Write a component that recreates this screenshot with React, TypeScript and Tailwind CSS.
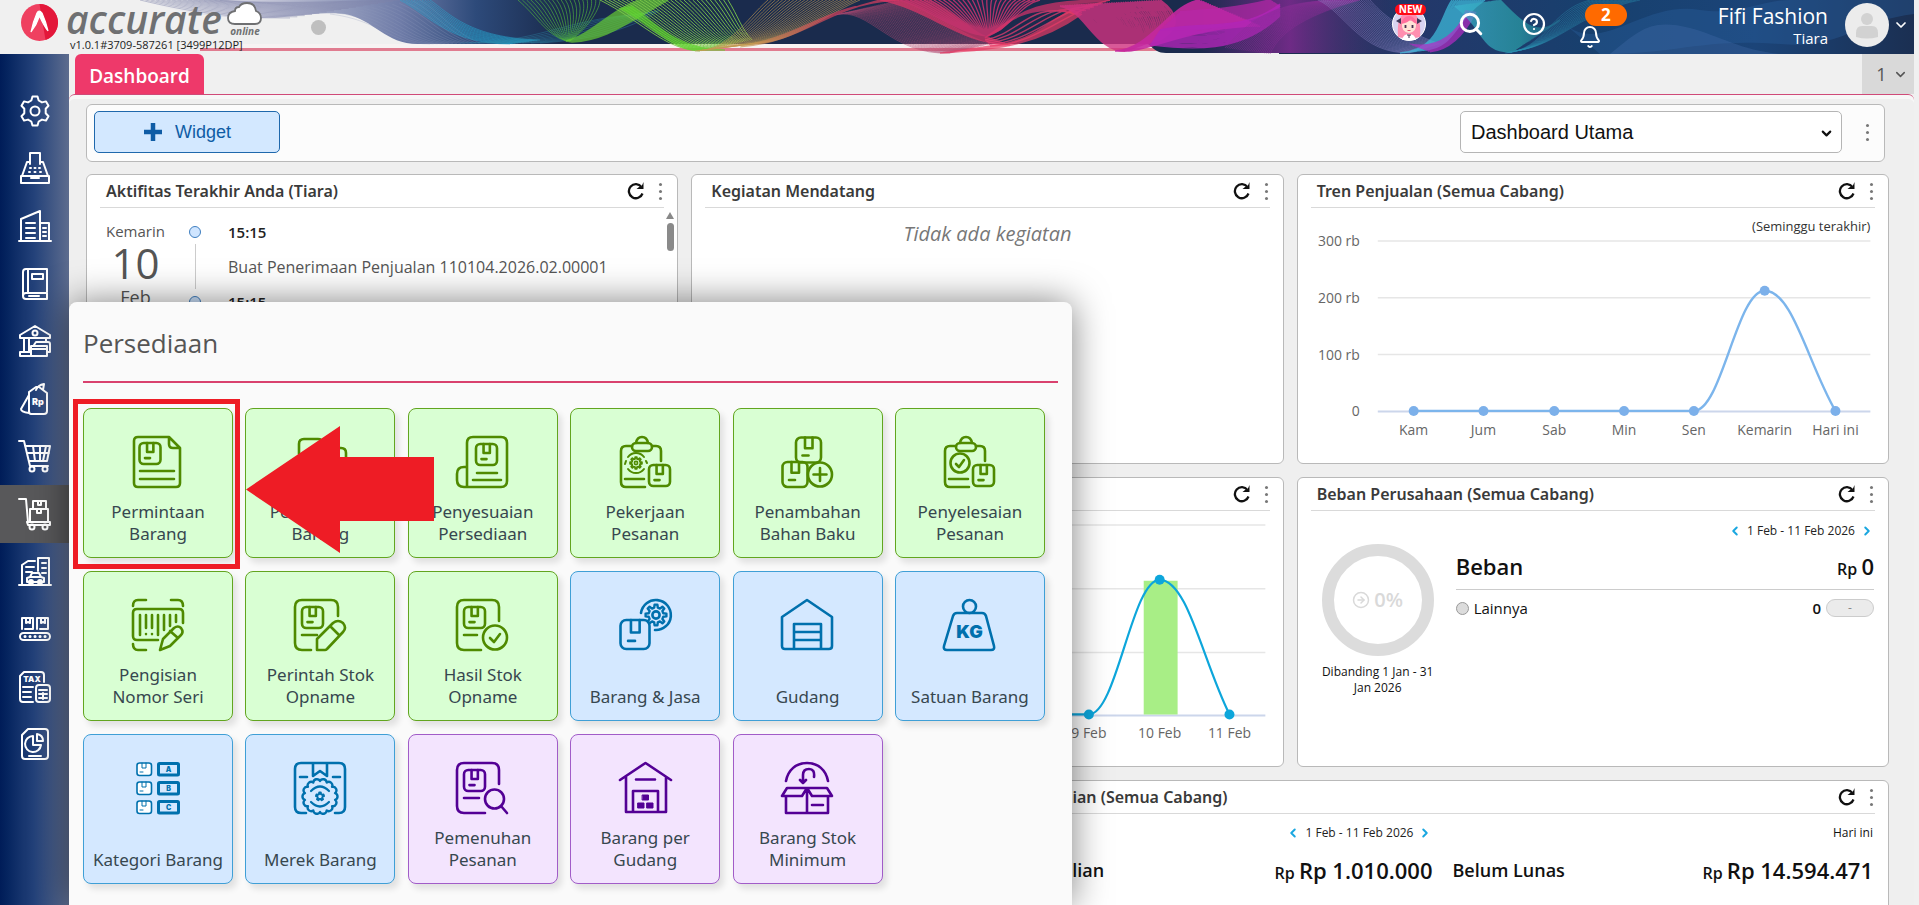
import React from "react";
import { Bell, ChevronDown, ChevronLeft, ChevronRight, CircleArrowRight, CircleHelp, Search } from "lucide-react";
import clsx from "clsx";

type Tone = "green" | "blue" | "purple";

const toneClass: Record<Tone, string> = {
  green: "bg-[#d9ffd3] border-[#62a51f] text-[#4f8a00]",
  blue: "bg-[#d4e8ff] border-[#3f9fd6] text-[#0070ad]",
  purple: "bg-[#f3e4fe] border-[#a15cc8] text-[#530095]",
};

// closed gear outline with flat teeth
const gearPath = (cx: number, cy: number, outer: number, inner: number, teeth: number) => {
  const pts: string[] = [];
  const step = (Math.PI * 2) / teeth;
  for (let i = 0; i < teeth; i++) {
    const a = i * step - Math.PI / 2;
    [
      [inner, -0.3],
      [outer, -0.17],
      [outer, 0.17],
      [inner, 0.3],
    ].forEach(([r, o]) => {
      pts.push(`${(cx + r * Math.cos(a + o * step)).toFixed(1)} ${(cy + r * Math.sin(a + o * step)).toFixed(1)}`);
    });
  }
  return `M${pts.join("L")}Z`;
};

// scalloped outline used on the brand badge
const sealPath = (cx: number, cy: number, r: number, lobes: number) => {
  const pt = (i: number) => {
    const a = (i / lobes) * Math.PI * 2 - Math.PI / 2;
    return `${(cx + r * Math.cos(a)).toFixed(1)} ${(cy + r * Math.sin(a)).toFixed(1)}`;
  };
  let d = `M${pt(0)}`;
  for (let i = 1; i <= lobes; i++) d += `A3.6 3.6 0 0 1 ${pt(i)}`;
  return d + "Z";
};

const Pkg = ({ x, y, s }: { x: number; y: number; s: number }) => (
  <g>
    <rect x={x} y={y} width={s} height={s} rx={s * 0.2} />
    <path d={`M${x + s * 0.36} ${y}v${s * 0.43}h${s * 0.3}v${-s * 0.43}`} />
    <path d={`M${x + s * 0.26} ${y + s * 0.72}h${s * 0.24}`} />
  </g>
);

const Clipboard = () => (
  <>
    <path d="M13 10H7q-5 0-5 5v31q0 5 5 5h19M33 10h4q5 0 5 5v10M6 43h19" />
    <rect x="13" y="7" width="20" height="8" rx="4" />
    <path d="M17 7q1-6 6-6t6 6" />
    <Pkg x={30} y={29} s={21} />
  </>
);

const tileIcons: Record<string, React.ReactNode> = {
  request: (
    <>
      <path d="M37 1H6q-4 0-4 4v42q0 4 4 4h38q4 0 4-4V12zM37 1v7q0 4 4 4h7" />
      <Pkg x={7.5} y={7} s={21} />
      <path d="M8 35h34M8 43h34" />
    </>
  ),
  transfer: (
    <>
      <path d="M5 18V8q0-5 5-5h14q4 0 4 4v12M40 12h7q5 0 5 5v10" />
      <Pkg x={4} y={28} s={21} />
      <path d="M30 38h20m-6-6l6 6-6 6" />
    </>
  ),
  adjust: (
    <>
      <path d="M11 51V7q0-6 6-6h28q6 0 6 6v38q0 6-6 6H8q-7 0-7-7v-6q0-7 7-7h3" />
      <Pkg x={20} y={8} s={21} />
      <path d="M21 37h20M17 44h28" />
    </>
  ),
  job: (
    <>
      <Clipboard />
      <path d={gearPath(17, 27, 6, 4.2, 8)} strokeWidth="1.8" />
      <circle cx="17" cy="27" r="1.6" strokeWidth="1.6" />
      <path d="M9 21a10 10 0 0 1 16 0M25 33a10 10 0 0 1-16 0M7 25l-1 3M27 25l1 2" strokeWidth="2" />
    </>
  ),
  material: (
    <>
      <Pkg x={15} y={1.5} s={25} />
      <Pkg x={1.5} y={26} s={25} />
      <circle cx="39" cy="38.5" r="12" fill="#d9ffd3" />
      <path d="M39 32v13M32.5 38.5h13" />
    </>
  ),
  finish: (
    <>
      <Clipboard />
      <circle cx="17" cy="27" r="9.5" />
      <path d="M13 28l3 3 5-7" />
    </>
  ),
  serial: (
    <>
      <path d="M1 7q0-6 5-6h8M39 1h7q5 0 5 6M1 45q0 6 5 6h8M26 41H5q-4 0-4-4V14q0-4 4-4h42q4 0 4 4v10" />
      <path d="M8 16v20M14 16v13M20 16v13M26 16v20M32 16v15M38 16v11M44 16v7M14 35v.1M20 35v.1" />
      <path d="M28 51l3-11 11-11q4-3 7 0 3 4 0 7L38 47zM38 32l8 7" />
    </>
  ),
  order: (
    <>
      <path d="M17 51H8q-7 0-7-7V8q0-7 7-7h29q7 0 7 7v9M8 36h15" />
      <Pkg x={8} y={8} s={21} />
      <path d="M23 51V40l16-16q5-4 10 0 4 5 0 9L33 50q-1 1-2 1zM36 27l9 9" />
    </>
  ),
  result: (
    <>
      <path d="M25 51H8q-7 0-7-7V8q0-7 7-7h28q7 0 7 7v14M8 36h13" />
      <Pkg x={8} y={8} s={21} />
      <circle cx="39" cy="38.5" r="12" />
      <path d="M34 39l4 4 6-8" />
    </>
  ),
  goods: (
    <>
      <Pkg x={1.5} y={21} s={29} />
      <path d="M22 14A15 15 0 1 1 36 31" />
      <path d={gearPath(37, 16, 10.5, 7.5, 8)} strokeWidth="2.4" />
      <circle cx="37" cy="16" r="3.6" />
    </>
  ),
  warehouse: <path d="M4 50q-3 0-3-3V18L26 1l25 17v29q0 3-3 3zM13 50V25h27v25M13 33h27M13 41h27" />,
  unit: (
    <>
      <circle cx="26.5" cy="7.5" r="6.5" />
      <path d="M14 14h25q3 0 4 3l8 30q1 4-3 4H4q-4 0-3-4l9-30q1-3 4-3z" />
      <text x="26.5" y="39" textAnchor="middle" className="font-['Inter'] text-[18px] font-black" fill="currentColor" stroke="none">
        KG
      </text>
    </>
  ),
  category: (
    <>
      {["A", "B", "C"].map((letter, i) => (
        <g key={letter} transform={`translate(0 ${i * 19})`}>
          <rect x="5" y="1" width="14.5" height="12.5" rx="2.5" fill="#fff" strokeWidth="1.6" />
          <path d="M10 1v5h4V1M8 10h3" strokeWidth="1" />
          <rect x="26.5" y="1.5" width="20" height="11.5" rx="1" strokeWidth="3" />
          <text x="36.5" y="9.5" textAnchor="middle" className="font-['Inter'] text-[7px] font-black" fill="currentColor" stroke="none">
            {letter}
          </text>
        </g>
      ))}
    </>
  ),
  brand: (
    <>
      <path d="M12 51H7q-6 0-6-6V7q0-6 6-6h38q6 0 6 6v38q0 6-6 6h-4M19 1v13l7-5 7 5V1M6 15h7M39 15h7" />
      <path d={sealPath(26, 34.5, 15.5, 14)} strokeWidth="2.4" />
      <path d="M17 29q9-9 18 0M17 40q9 9 18 0" strokeWidth="2.2" />
      <path d={gearPath(26, 34.5, 4, 2.6, 5)} strokeWidth="2" />
    </>
  ),
  fulfil: (
    <>
      <path d="M29 51H8q-7 0-7-7V8q0-7 7-7h28q7 0 7 7v14M8 36h15" />
      <Pkg x={8} y={8} s={21} />
      <circle cx="38.5" cy="37" r="9.5" />
      <path d="M45 44l6 7" />
    </>
  ),
  perWarehouse: (
    <>
      <path d="M1 18L26.5 1 52 18M7 15v35h40V15M17 17.5h19M14 50V29h25v21" />
      <path d="M23.5 33h6v5h-6zM19 41h6v5h-6zM28 41h6v5h-6z" fill="currentColor" strokeWidth="1" />
    </>
  ),
  minimum: (
    <>
      <path d="M5 19C7 8 15 1 26 1s19 7 21 18M22 21V13q0-6 6-6 6 0 5 8M19 18l3 3 3-3" />
      <path d="M6 26h40l5 8H31l-5-8-5 8H1zM5 34v17h42V34M26 26v25M31 43h11" />
    </>
  ),
};

const menuItems: { label: string; icon: string; tone: Tone }[] = [
  { label: "Permintaan Barang", icon: "request", tone: "green" },
  { label: "Pemindahan Barang", icon: "transfer", tone: "green" },
  { label: "Penyesuaian Persediaan", icon: "adjust", tone: "green" },
  { label: "Pekerjaan Pesanan", icon: "job", tone: "green" },
  { label: "Penambahan Bahan Baku", icon: "material", tone: "green" },
  { label: "Penyelesaian Pesanan", icon: "finish", tone: "green" },
  { label: "Pengisian Nomor Seri", icon: "serial", tone: "green" },
  { label: "Perintah Stok Opname", icon: "order", tone: "green" },
  { label: "Hasil Stok Opname", icon: "result", tone: "green" },
  { label: "Barang & Jasa", icon: "goods", tone: "blue" },
  { label: "Gudang", icon: "warehouse", tone: "blue" },
  { label: "Satuan Barang", icon: "unit", tone: "blue" },
  { label: "Kategori Barang", icon: "category", tone: "blue" },
  { label: "Merek Barang", icon: "brand", tone: "blue" },
  { label: "Pemenuhan Pesanan", icon: "fulfil", tone: "purple" },
  { label: "Barang per Gudang", icon: "perWarehouse", tone: "purple" },
  { label: "Barang Stok Minimum", icon: "minimum", tone: "purple" },
];

const navItems: { label: string; active?: boolean; icon: React.ReactNode }[] = [
  {
    label: "Pengaturan",
    icon: (
      <>
        <path d="M13.5 1.5h5l1.2 4 3.3 1.9 4-1 2.5 4.3-2.8 3v4.6l2.8 3-2.5 4.3-4-1-3.3 1.9-1.2 4h-5l-1.2-4L9 24.6l-4 1-2.5-4.3 2.8-3v-4.6l-2.8-3L5 6.4l4 1 3.3-1.9z" />
        <circle cx="16" cy="16" r="4.5" />
      </>
    ),
  },
  {
    label: "Kasir",
    icon: (
      <>
        <path d="M11 12V1h10v11M8 10h3M21 10h3l5 14H3L8 10M2 24h28v7H2zM12 26h8" />
        <path d="M11 16h1M15.5 16h1M20 16h1M10 20h1M15.5 20h1M21 20h1" />
      </>
    ),
  },
  {
    label: "Perusahaan",
    icon: <path d="M0 31h32M2 31V9l19-8v30M21 13h9v18M7 13h9M7 18h9M7 23h9M7 28h9M24 18h3M24 22h3M24 26h3" />,
  },
  {
    label: "Buku Besar",
    icon: <path d="M28 24V1H7Q4 1 4 4v24q0 3 3 3h21v-6H7q-3 0-3 3M9 1v24M13 6h11v5H13zM10 28h10" />,
  },
  {
    label: "Kas & Bank",
    icon: (
      <>
        <path d="M1 10L16 1l15 9v3H1zM5 13v14M10 13v14M27 13v4M1 31v-4h10M1 31h10" />
        <circle cx="16" cy="8" r="2.5" />
        <path d="M15 20l2-3h12q2 0 2 2v8h-3M12 21h16v10H12zM12 24h16" />
      </>
    ),
  },
  {
    label: "Penjualan",
    icon: (
      <>
        <path d="M10 9l7-5h3l8 6v18q0 3-3 3H12q-2 0-2-3zM10 12L2 26q0 3 8 4M17 7q2-5 8-6l-1 6" />
        <text x="19" y="22" textAnchor="middle" className="font-['Inter'] text-[9px] font-black" fill="currentColor" stroke="none">
          Rp
        </text>
      </>
    ),
  },
  {
    label: "Pembelian",
    icon: (
      <>
        <path d="M0 1h5l6 25h18M6 6h25l-3 15H10M8 13h22M14 6l2 15M21 6v15M27 6l-3 15" />
        <circle cx="13" cy="29" r="2.5" />
        <circle cx="26" cy="29" r="2.5" />
      </>
    ),
  },
  {
    label: "Persediaan",
    active: true,
    icon: (
      <>
        <path d="M0 1h7l2 23M8 24h23v3H9zM11 11h18v13H11zM14 3h13v8H14zM19 3v4h3V3M18 11v4h4v-4" />
        <circle cx="13" cy="29" r="2.5" />
        <circle cx="26" cy="29" r="2.5" />
      </>
    ),
  },
  {
    label: "Aset Tetap",
    icon: (
      <>
        <path d="M0 30h32M3 30V10l6-4h7M19 16V3h11v27M7 12h8M7 17h6M23 8h4M23 13h4M23 18h4" />
        <path d="M8 27v-4l3-1 2-4h7l2 4 3 1v4zM11 22h11" />
        <circle cx="12" cy="27" r="2" />
        <circle cx="21" cy="27" r="2" />
      </>
    ),
  },
  {
    label: "Manufaktur",
    icon: (
      <>
        <path d="M3 16V5h11v11H6M18 16V5h11v11h-8M7 5v5l2-1 2 1V5M22 5v5l2-1 2 1V5" />
        <rect x="1" y="20" width="30" height="7" rx="3.5" />
        <path d="M6 23.5h.1M11 23.5h.1M16 23.5h.1M21 23.5h.1M26 23.5h.1" strokeWidth="3" />
      </>
    ),
  },
  {
    label: "Pajak",
    icon: (
      <>
        <path d="M14 31H4q-3 0-3-3V5l4-4h17q3 0 3 3v7M4 16h10M4 21h8M4 26h8" />
        <rect x="17" y="14" width="14" height="17" rx="3" />
        <path d="M20 19h8M20 23h8M20 27h8M24 22v6" />
        <text x="13" y="11" textAnchor="middle" className="font-['Inter'] text-[8px] font-black" fill="currentColor" stroke="none">
          TAX
        </text>
      </>
    ),
  },
  {
    label: "Laporan",
    icon: <path d="M9 1h17q3 0 3 3v24q0 3-3 3H6q-3 0-3-3V7zM14 8a8 8 0 1 0 8 9h-8zM18 6v7h6q0-6-6-7M10 28h12" />,
  },
];

type Curve = number[];

interface RibbonProps {
  a: Curve;
  b: Curve;
  n: number;
  color: string;
  opacity?: number;
  width?: number;
}

// a family of curves blended between two edges
const Ribbon = ({ a, b, n, color, opacity = 0.7, width = 0.8 }: RibbonProps) => {
  const d = Array.from({ length: n }, (_, i) => {
    const t = i / (n - 1);
    const p = a.map((v, k) => (v + (b[k] - v) * t).toFixed(1));
    return `M${p[0]} ${p[1]}C${p.slice(2).join(" ")}`;
  }).join("");
  return <path d={d} fill="none" stroke={color} strokeWidth={width} opacity={opacity} />;
};

const HeaderArt = () => (
  <svg viewBox="0 0 1914 54" preserveAspectRatio="none" className="absolute inset-0 h-full w-full" aria-hidden="true">
    <defs>
      <linearGradient id="navy" x1="140" x2="560" y1="0" y2="0" gradientUnits="userSpaceOnUse">
        <stop offset="0" stopColor="#e4e5ec" stopOpacity="0" />
        <stop offset="0.3" stopColor="#c4c6d8" />
        <stop offset="0.62" stopColor="#6f7ca8" />
        <stop offset="0.8" stopColor="#2d4a7a" />
        <stop offset="1" stopColor="#1a2b4d" />
      </linearGradient>
      <linearGradient id="hot" x1="740" x2="1120" y1="0" y2="0" gradientUnits="userSpaceOnUse">
        <stop offset="0" stopColor="#c0a050" />
        <stop offset="0.25" stopColor="#d8405c" />
        <stop offset="1" stopColor="#ee3070" />
      </linearGradient>
      <linearGradient id="violet" x1="1200" x2="1400" y1="0" y2="0" gradientUnits="userSpaceOnUse">
        <stop offset="0" stopColor="#8a2a98" stopOpacity="0" />
        <stop offset="0.45" stopColor="#8a2a98" stopOpacity="0.75" />
        <stop offset="1" stopColor="#4a3a78" stopOpacity="0" />
      </linearGradient>
      <linearGradient id="right" x1="1280" x2="1914" y1="0" y2="0" gradientUnits="userSpaceOnUse">
        <stop offset="0" stopColor="#1a2b4d" />
        <stop offset="0.22" stopColor="#23386a" />
        <stop offset="0.5" stopColor="#17406e" />
        <stop offset="0.75" stopColor="#1b4478" />
        <stop offset="1" stopColor="#1b2f52" />
      </linearGradient>
      <linearGradient id="teal" x1="1440" x2="1600" y1="0" y2="0" gradientUnits="userSpaceOnUse">
        <stop offset="0" stopColor="#3fb8d8" />
        <stop offset="0.5" stopColor="#2aa0a8" />
        <stop offset="1" stopColor="#1c5a8c" stopOpacity="0.3" />
      </linearGradient>
    </defs>
    <path d="M200 48H1170V51H200z" fill="#e07c90" />
    <path d="M240 44H1165V48H240z" fill="#f7f3f3" />
    <path d="M140 0C180 14 230 20 275 18 310 14 330 12 345 14 375 20 385 44 418 44H1148C1155 50 1158 53 1166 53H1280V0z" fill="url(#navy)" />
    <path d="M1279 0H1914V54H1279z" fill="url(#right)" />
    <path d="M1200 0H1400V53H1200z" fill="url(#violet)" />
    <Ribbon a={[140, 0, 190, 12, 230, 18, 290, 18]} b={[220, 0, 270, 4, 320, 2, 400, 0]} n={16} color="#7f83a8" opacity={0.6} />
    <Ribbon a={[330, 14, 380, 20, 390, 44, 430, 44]} b={[420, 0, 440, 12, 455, 34, 480, 43]} n={14} color="#8d98bb" opacity={0.35} />
    <Ribbon a={[400, 0, 430, 16, 450, 44, 510, 44]} b={[430, 0, 450, 14, 470, 38, 540, 40]} n={12} color="#25a5cf" opacity={0.7} />
    <Ribbon a={[540, 43, 590, 40, 630, 30, 660, 10]} b={[460, 43, 540, 43, 560, 20, 640, 14]} n={10} color="#2d86a8" opacity={0.5} />
    <Ribbon a={[518, 0, 535, 14, 545, 34, 566, 41]} b={[600, 0, 600, 8, 590, 26, 570, 41]} n={20} color="#4fae3f" opacity={0.85} />
    <Ribbon a={[566, 41, 590, 36, 610, 10, 640, 0]} b={[572, 42, 605, 40, 622, 26, 668, 0]} n={16} color="#66cc33" width={1.6} />
    <Ribbon a={[600, 0, 640, 20, 665, 50, 700, 51]} b={[728, 0, 738, 16, 742, 30, 752, 40]} n={30} color="#7cc84a" opacity={0.9} width={1} />
    <Ribbon a={[620, 8, 650, 24, 670, 48, 695, 50]} b={[632, 6, 660, 28, 680, 50, 725, 50]} n={8} color="#5fd32e" width={1.4} />
    <Ribbon a={[695, 51, 730, 50, 745, 20, 768, 0]} b={[755, 43, 790, 44, 830, 12, 860, 0]} n={26} color="#c39a52" opacity={0.75} />
    <Ribbon a={[740, 47, 800, 42, 820, 14, 880, 0]} b={[760, 42, 810, 30, 830, 4, 900, 0]} n={18} color="url(#hot)" width={1.2} />
    <Ribbon a={[835, 15, 870, 6, 890, 56, 950, 53]} b={[900, 0, 930, 8, 950, 30, 990, 44]} n={34} color="#b04a72" opacity={0.6} />
    <Ribbon a={[880, 0, 930, 10, 960, 44, 1010, 45]} b={[930, 0, 960, 16, 975, 34, 985, 36]} n={16} color="#e23568" width={1.2} />
    <Ribbon a={[900, 0, 930, 10, 960, 34, 986, 36]} b={[1040, 0, 1020, 4, 1010, 30, 986, 36]} n={30} color="#c2336d" opacity={0.9} width={1.3} />
    <Ribbon a={[985, 40, 1020, 34, 1030, 0, 1075, 14]} b={[990, 46, 1040, 44, 1070, 8, 1110, 0]} n={5} color="#ef3f70" width={1.4} />
    <Ribbon a={[985, 38, 1010, 20, 1030, 2, 1078, 14]} b={[1000, 30, 1020, 10, 1040, 0, 1110, 0]} n={9} color="#d8336a" width={1.6} />
    <Ribbon a={[940, 53, 1000, 50, 1040, 44, 1082, 14]} b={[990, 46, 1030, 44, 1050, 20, 1072, 10]} n={16} color="#e83a64" width={1.4} />
    <Ribbon a={[1060, 6, 1085, 10, 1095, 51, 1125, 51]} b={[1160, 0, 1180, 14, 1180, 28, 1160, 40]} n={44} color="#cf3280" width={1.8} opacity={0.8} />
    <Ribbon a={[1115, 51, 1150, 50, 1170, 4, 1200, 0]} b={[1130, 51, 1160, 46, 1200, 26, 1260, 26]} n={28} color="#c4289f" opacity={0.9} width={1.7} />
    <Ribbon a={[1180, 12, 1210, 10, 1240, 8, 1270, 0]} b={[1160, 30, 1200, 28, 1240, 30, 1280, 6]} n={14} color="#b826a8" opacity={0.7} width={2} />
    <Ribbon a={[1160, 30, 1200, 20, 1240, 34, 1280, 4]} b={[1150, 45, 1190, 50, 1240, 54, 1280, 16]} n={20} color="#b026b8" opacity={0.8} width={1.2} />
    <Ribbon a={[1225, 48, 1250, 20, 1270, 4, 1330, 0]} b={[1270, 54, 1280, 30, 1310, 14, 1360, 0]} n={26} color="#8a2f96" opacity={0.6} />
    <Ribbon a={[1318, 0, 1345, 12, 1360, 54, 1410, 53]} b={[1370, 0, 1380, 12, 1400, 30, 1440, 44]} n={24} color="#8f87c8" opacity={0.55} />
    <Ribbon a={[1400, 53, 1440, 50, 1440, 16, 1452, 0]} b={[1425, 50, 1455, 48, 1455, 20, 1485, 0]} n={18} color="#3fc0e0" width={1.4} />
    <Ribbon a={[1410, 44, 1440, 50, 1460, 30, 1466, 10]} b={[1430, 52, 1450, 50, 1465, 34, 1476, 12]} n={10} color="#b52bc4" width={1.2} />
    <Ribbon a={[1455, 6, 1485, 28, 1480, 53, 1512, 52]} b={[1500, 0, 1520, 20, 1535, 40, 1560, 20]} n={34} color="url(#teal)" width={1.6} />
    <Ribbon a={[1505, 53, 1545, 50, 1550, 10, 1590, 0]} b={[1520, 50, 1560, 44, 1580, 12, 1640, 0]} n={14} color="#2a8fb0" opacity={0.5} />
    <path d="M1560 20C1600 60 1640 0 1700 10 1740 16 1760 0 1790 0H1914V14C1860 20 1840 50 1780 44 1700 38 1680 54 1600 54z" fill="#2b62a0" opacity="0.35" />
    <path d="M1610 54C1640 30 1650 18 1690 28 1720 36 1740 50 1780 54z" fill="#4a6fb0" opacity="0.3" />
  </svg>
);

const Logo = () => (
  <a href="#beranda" aria-label="Beranda" className="relative flex items-start pl-[21px]">
    <svg viewBox="0 0 37 37" className="mt-1 h-[37px] w-[37px]" aria-hidden="true">
      <circle cx="18.5" cy="18.5" r="18.5" fill="#ef4060" />
      <path d="M18.5 0a18.5 18.5 0 0 1 6 36z" fill="#e3173a" />
      <path d="M10 28q2-10 6-19 2-4 5 0 4 9 6 18-4-5-8.5-15-3 9-8.5 16z" fill="#fff" stroke="#fff" strokeWidth="1.2" />
    </svg>
    <span className="ml-2 flex flex-col">
      <span className="text-[39px] leading-[38px] font-semibold text-[#6f7072] italic">accurate</span>
      <span className="ml-1 text-[11px] leading-[14px] text-[#222]">v1.0.1#3709-587261 [3499P12DP]</span>
    </span>
  </a>
);

const Header = () => (
  <header className="relative mr-[5px] flex h-[54px] justify-between bg-[#f0f0f0]">
    <HeaderArt />
    <div className="relative flex">
      <Logo />
      <span className="absolute top-[2px] left-[227px] flex flex-col items-center">
        <svg viewBox="0 0 36 24" className="h-[24px] w-[36px]" fill="#fff" stroke="#6f7072" strokeWidth="1.8" aria-hidden="true">
          <path d="M8 22Q1 22 1 16t7-7q0-4 4-4 2-4 8-4 8 0 9 8 5 2 5 7 0 6-6 6z" />
        </svg>
        <span className="text-[10px] leading-[10px] font-bold text-[#6f7072] italic">online</span>
      </span>
      <span className="absolute top-[20px] left-[311px] h-[15px] w-[15px] rounded-full bg-[#bfbfbf]" />
    </div>
    <div className="relative flex items-start text-white">
      <button aria-label="Asisten" className="relative mt-[7px] h-[34px] w-[34px]">
        <svg viewBox="0 0 34 34" aria-hidden="true">
          <circle cx="17" cy="17" r="16.5" fill="#d8d3f0" stroke="#fff" />
          <path d="M6 30Q4 6 17 5q13 1 11 25l-5 1H11z" fill="#ff8fb0" />
          <path d="M4 14l5-3v6zM30 14l-5-3v6z" fill="#3d3757" />
          <path d="M10 16q7-5 14 0 1 9-7 10-8-1-7-10z" fill="#ffe3d6" />
          <path d="M9 17q2-8 8-8t8 8q-4-1-6-5-3 4-10 5z" fill="#ff6f9c" />
          <path d="M13.5 18v3M20.5 18v3" stroke="#44304f" strokeWidth="1.8" />
          <path d="M15.5 23.5h3" stroke="#e05070" />
          <path d="M10 33q1-6 7-6t7 6z" fill="#fff" />
          <path d="M15 28h4M17 28v3" stroke="#40304f" />
        </svg>
        <span className="absolute -top-[3px] left-[3px] rounded-full bg-[#ff0a14] px-1 text-[10px] leading-[11px] font-bold">NEW</span>
      </button>
      <button aria-label="Cari" className="mt-[11px] ml-[32px]">
        <Search size={26} strokeWidth={2.8} />
      </button>
      <button aria-label="Bantuan" className="mt-[12px] ml-[38px]">
        <CircleHelp size={24} strokeWidth={2.2} />
      </button>
      <button aria-label="Notifikasi" className="relative mt-[25px] ml-[32px]">
        <Bell size={24} strokeWidth={2} />
        <span className="absolute -top-[21px] left-[7px] h-[22px] w-[42px] rounded-full bg-[#ff6a00] text-[17px] leading-[21px] font-bold">2</span>
      </button>
      <div className="mt-[3px] ml-[116px] text-right">
        <p className="text-[21px] leading-[26px]">Fifi Fashion</p>
        <p className="text-[15px] leading-[18px]">Tiara</p>
      </div>
      <button aria-label="Akun" className="mt-[3px] mr-[5px] ml-[17px] flex items-center gap-1">
        <svg viewBox="0 0 44 44" className="h-[44px] w-[44px]" aria-hidden="true">
          <circle cx="22" cy="22" r="22" fill="#ececec" />
          <circle cx="22" cy="16" r="6" fill="#d2d2d2" />
          <path d="M11 34v-4q0-7 6-7h10q6 0 6 7v4q-11 3-22 0z" fill="#d2d2d2" />
        </svg>
        <ChevronDown size={16} strokeWidth={2.6} />
      </button>
    </div>
  </header>
);

const Sidebar = () => (
  <aside className="w-[69px] shrink-0 bg-linear-to-r from-[#001c58] via-[#24427a] to-[#5d6c8e] pt-[28px]">
    <nav className="flex h-[691px] flex-col">
      {navItems.map((item) => (
        <button
          key={item.label}
          aria-label={item.label}
          className={clsx("flex w-full flex-1 items-center justify-center text-white", item.active && "bg-[#58585a]")}
        >
          <svg viewBox="-1 -1 34 34" className="h-[34px] w-[34px]" fill="none" stroke="currentColor" strokeWidth="2" strokeLinecap="round" strokeLinejoin="round" aria-hidden="true">
            {item.icon}
          </svg>
        </button>
      ))}
    </nav>
  </aside>
);

const Dots = () => (
  <span className="flex flex-col gap-1">
    <i className="h-[3px] w-[3px] rounded-full bg-[#777]" />
    <i className="h-[3px] w-[3px] rounded-full bg-[#777]" />
    <i className="h-[3px] w-[3px] rounded-full bg-[#777]" />
  </span>
);

const Widget = ({ title, className, children }: { title?: string; className?: string; children?: React.ReactNode }) => (
  <section className={clsx("flex h-[290px] flex-col overflow-hidden rounded-md border border-[#b9b9b9] bg-white", className)}>
    <header className="mx-[13px] flex h-[33px] shrink-0 items-center border-b border-[#d9d9d9] pr-[2px] pl-[6px]">
      <h2 className="flex-1 font-['Noto_Sans',sans-serif] text-[16px] leading-[22px] font-semibold text-[#3a3a3a]">{title}</h2>
      <button aria-label="Muat ulang" className="mr-[14px]">
        <svg viewBox="0 0 18 18" className="h-[18px] w-[18px]" fill="none" stroke="#111" strokeWidth="2.3" aria-hidden="true">
          <path d="M15.5 11.5A7 7 0 1 1 14.5 5" />
          <path d="M16.5 0v7h-7l2.5-2 2.5-.5z" fill="#111" stroke="none" />
        </svg>
      </button>
      <button aria-label="Opsi">
        <Dots />
      </button>
    </header>
    {children}
  </section>
);

const Activity = () => (
  <div className="flex min-h-0 flex-1 pr-[3px]">
    <div className="flex w-[97px] flex-col items-center pt-[13px] text-[#555]">
      <span className="text-[15px] leading-[20px]">Kemarin</span>
      <span className="text-[42px] leading-[44px]">10</span>
      <span className="text-[18px] leading-[24px]">Feb</span>
    </div>
    <ul className="flex-1 pt-[11px] pl-[5px]">
      {["Buat Penerimaan Penjualan 110104.2026.02.00001", ""].map((text, i) => (
        <li key={i} className="flex gap-[27px]">
          <div className="flex w-[12px] flex-col items-center gap-[6px] pt-[7px]">
            <span className="h-[12px] w-[12px] rounded-full border border-[#3f7fc0] bg-[#cfe5ff]" />
            <span className="w-px flex-1 bg-[#ccc]" />
          </div>
          <div className="h-[70px]">
            <p className="text-[15px] leading-[26px] font-semibold text-[#222]">15:15</p>
            <p className="pt-[9px] text-[16px] leading-[26px] text-[#555]">{text}</p>
          </div>
        </li>
      ))}
    </ul>
    <div className="flex flex-col items-center gap-[4px] pt-1" aria-hidden="true">
      <span className="h-0 w-0 border-x-4 border-b-[7px] border-x-transparent border-b-[#888]" />
      <span className="h-[28px] w-[7px] rounded-full bg-[#8a8a8a]" />
    </div>
  </div>
);

const trend = [
  { day: "Kam", x: 116 },
  { day: "Jum", x: 186 },
  { day: "Sab", x: 257 },
  { day: "Min", x: 327 },
  { day: "Sen", x: 397 },
  { day: "Kemarin", x: 468 },
  { day: "Hari ini", x: 539 },
];

const TrendChart = () => (
  <svg viewBox="0 0 592 250" className="w-full text-[14px]" role="img" aria-label="Tren Penjualan">
    {["300 rb", "200 rb", "100 rb", "0"].map((label, i) => (
      <g key={label}>
        <path d={`M80 ${33 + i * 57}H574`} stroke={i === 3 ? "#ccd6eb" : "#e6e6e6"} strokeWidth={i === 3 ? 2 : 1.5} />
        <text x="62" y={38 + i * 57} textAnchor="end" fill="#666">
          {label}
        </text>
      </g>
    ))}
    <text x="574" y="23" textAnchor="end" fill="#333" className="text-[13px]">
      (Seminggu terakhir)
    </text>
    <path d="M116 203.5H397C425 203.5 440 83 468 83C496 83 511 155 539 203.5" fill="none" stroke="#7cb5ec" strokeWidth="2.4" />
    {trend.map((p) => (
      <g key={p.day}>
        <circle cx={p.x} cy={p.day === "Kemarin" ? 83 : 203.5} r="5" fill="#7cb0ea" />
        <text x={p.x} y="228" textAnchor="middle" fill="#666">
          {p.day}
        </text>
      </g>
    ))}
  </svg>
);

const SalesChart = () => (
  <svg viewBox="0 0 592 250" className="w-full text-[14px]" role="img" aria-label="Grafik harian">
    {[14, 78, 142].map((y) => (
      <path key={y} d={`M80 ${y}H575`} stroke="#e6e6e6" strokeWidth="1.5" />
    ))}
    <path d="M80 205H575" stroke="#ccd6eb" strokeWidth="2" />
    <path d="M453 70H487V204H453z" fill="#a8ee86" />
    <path d="M116 204H398C426 204 441 69 469 69C497 69 512 150 539 204" fill="none" stroke="#0da6db" strokeWidth="2.2" />
    {[
      { label: "9 Feb", x: 398, y: 204 },
      { label: "10 Feb", x: 469, y: 69 },
      { label: "11 Feb", x: 539, y: 204 },
    ].map((p) => (
      <g key={p.label}>
        <circle cx={p.x} cy={p.y} r="5" fill="#0da6db" />
        <text x={p.x} y="228" textAnchor="middle" fill="#666">
          {p.label}
        </text>
      </g>
    ))}
  </svg>
);

const Period = () => (
  <div className="flex h-[20px] items-center gap-[5px] text-[12px] text-[#222]">
    <button aria-label="Periode sebelumnya" className="text-[#1aa7e0]">
      <ChevronLeft size={14} strokeWidth={3.4} />
    </button>
    1 Feb - 11 Feb 2026
    <button aria-label="Periode berikutnya" className="text-[#1aa7e0]">
      <ChevronRight size={14} strokeWidth={3.4} />
    </button>
  </div>
);

const Expense = () => (
  <div className="flex flex-col pt-[10px] pr-[14px] pl-[20px] text-[#111]">
    <div className="flex justify-end">
      <Period />
    </div>
    <div className="flex pt-[3px]">
      <figure className="w-[120px] text-center">
        <div className="mx-auto flex h-[112px] w-[112px] items-center justify-center gap-[4px] rounded-full border-[12px] border-[#dcdcdc] text-[20px] font-semibold text-[#d9d9d9]">
          <CircleArrowRight size={18} />
          0%
        </div>
        <figcaption className="px-[2px] pt-[8px] text-[12px] leading-4">Dibanding 1 Jan - 31 Jan 2026</figcaption>
      </figure>
      <div className="ml-[18px] flex-1">
        <div className="flex h-[46px] items-center justify-between border-b border-[#ccc]">
          <h3 className="text-[22px] font-semibold">Beban</h3>
          <p className="text-[16px] font-semibold">
            Rp <span className="text-[22px]">0</span>
          </p>
        </div>
        <div className="flex h-[36px] items-center text-[15px]">
          <span className="mr-[5px] h-[13px] w-[13px] rounded-full border border-[#999] bg-[#dcdcdc]" />
          <span className="flex-1">Lainnya</span>
          <span className="mr-[5px] font-semibold">0</span>
          <span className="h-[18px] w-[48px] rounded-full border border-[#ccc] bg-[#ebebeb] text-center text-[12px] leading-[15px] text-[#888]">-</span>
        </div>
      </div>
    </div>
  </div>
);

const Purchase = () => (
  <div className="grid grid-cols-2 gap-[20px] pt-[9px] pr-[15px] pl-[17px] text-[#111]">
    {[
      { label: "Pembelian", value: "Rp 1.010.000", head: <Period /> },
      { label: "Belum Lunas", value: "Rp 14.594.471", head: <span className="text-[12px] leading-[20px]">Hari ini</span> },
    ].map((row) => (
      <div key={row.label}>
        <div className="flex justify-end">{row.head}</div>
        <div className="flex h-[54px] items-center justify-between font-semibold">
          <h3 className="text-[18px]">{row.label}</h3>
          <p className="text-[16px]">
            Rp <span className="text-[22px]">{row.value}</span>
          </p>
        </div>
      </div>
    ))}
  </div>
);

const ModulePanel = () => (
  <div role="menu" aria-label="Persediaan" className="absolute top-[302px] bottom-0 left-[69px] w-[1003px] rounded-t-lg bg-[#fafafa] px-[14px] pt-[20px] shadow-[0_0_36px_rgba(0,0,0,0.5)]">
    <h1 className="h-[61px] border-b-2 border-[#d9416e] text-[26px] leading-[42px] text-[#555]">Persediaan</h1>
    <div className="mt-[25px] grid w-[962px] grid-cols-[repeat(6,150px)] justify-between gap-y-[13px]">
      {menuItems.map((item) => (
        <button
          key={item.label}
          role="menuitem"
          className={clsx(
            "flex h-[150px] flex-col items-center justify-between rounded-lg border pt-[26px] pb-[12px] shadow-[4px_5px_6px_rgba(0,0,0,0.1)]",
            toneClass[item.tone],
          )}
        >
          <svg viewBox="-1 -1 55 54" className="h-[54px] w-[55px]" fill="none" stroke="currentColor" strokeWidth="2.6" strokeLinecap="round" strokeLinejoin="round" aria-hidden="true">
            {tileIcons[item.icon]}
          </svg>
          <span className="w-[135px] font-['Noto_Sans',sans-serif] text-[17px] leading-[22px] text-[#37474f]">{item.label}</span>
        </button>
      ))}
    </div>
    <span className="pointer-events-none absolute top-[97px] left-[4px] h-[170px] w-[167px] border-[5px] border-[#ee1c25]" />
    <svg viewBox="0 0 188 127" className="pointer-events-none absolute top-[124px] left-[177px] h-[127px] w-[188px]" aria-hidden="true">
      <path d="M0 63.5L94 0v31h94v64H94v32z" fill="#ee1c25" />
    </svg>
  </div>
);

export default function App() {
  return (
    <div className="relative flex h-screen flex-col overflow-hidden bg-[#f0f0f0] font-['Open_Sans',sans-serif]">
      <Header />
      <div className="flex min-h-0 flex-1">
        <Sidebar />
        <main className="mr-[5px] flex min-w-0 flex-1 flex-col">
          <div className="flex h-[40px] shrink-0 justify-between pl-[6px]">
            <button className="w-[129px] rounded-t-md bg-[#ee396a] pt-1 text-[19px] font-semibold text-white">Dashboard</button>
            <button className="flex w-[52px] items-center justify-center gap-[6px] bg-[#d9d9d9] pl-[8px] text-[18px] text-[#555]">
              1
              <ChevronDown size={15} strokeWidth={2.4} />
            </button>
          </div>
          <div className="flex-1 overflow-hidden rounded-t-md border-t border-[#d04a78] bg-[#efefef] shadow-[inset_0_4px_0_#f7f7f7]">
            <div className="mt-[9px] mr-[29px] ml-[17px] flex h-[58px] items-center rounded-md border border-[#b9b9b9] bg-[#fcfcfc] pb-[2px] pl-[7px]">
              <button className="flex h-[42px] w-[186px] items-center justify-center gap-[12px] rounded-[5px] border border-[#1f68ac] bg-[#d3e8ff] font-['Liberation_Sans',sans-serif] text-[18px] text-[#0f5ca5]">
                <svg viewBox="0 0 20 20" className="h-[20px] w-[20px]" aria-hidden="true">
                  <path d="M10 1v18M1 10h18" stroke="#0f5ca5" strokeWidth="4.5" />
                </svg>
                Widget
              </button>
              <div className="relative ml-auto">
                <select aria-label="Dashboard" className="h-[42px] w-[382px] appearance-none rounded-[5px] border border-[#b5b5b5] bg-white px-[10px] font-['Liberation_Sans',sans-serif] text-[20px] text-[#111]">
                  <option>Dashboard Utama</option>
                </select>
                <ChevronDown size={15} strokeWidth={3.4} className="pointer-events-none absolute top-[15px] right-[8px] text-[#111]" />
              </div>
              <button aria-label="Opsi dashboard" className="mr-[15px] ml-[24px]">
                <Dots />
              </button>
            </div>
            <div className="mt-[12px] mr-[25px] ml-[17px] grid grid-cols-6 gap-[13px]">
              <Widget title="Aktifitas Terakhir Anda (Tiara)" className="col-span-2">
                <Activity />
              </Widget>
              <Widget title="Kegiatan Mendatang" className="col-span-2">
                <p className="pt-[11px] text-center text-[20px] text-[#777] italic">Tidak ada kegiatan</p>
              </Widget>
              <Widget title="Tren Penjualan (Semua Cabang)" className="col-span-2">
                <TrendChart />
              </Widget>
              <Widget className="col-span-2" />
              <Widget className="col-span-2">
                <SalesChart />
              </Widget>
              <Widget title="Beban Perusahaan (Semua Cabang)" className="col-span-2">
                <Expense />
              </Widget>
              <Widget className="col-span-3" />
              <Widget title="Pembelian (Semua Cabang)" className="col-span-3">
                <Purchase />
              </Widget>
            </div>
          </div>
        </main>
      </div>
      <ModulePanel />
    </div>
  );
}
